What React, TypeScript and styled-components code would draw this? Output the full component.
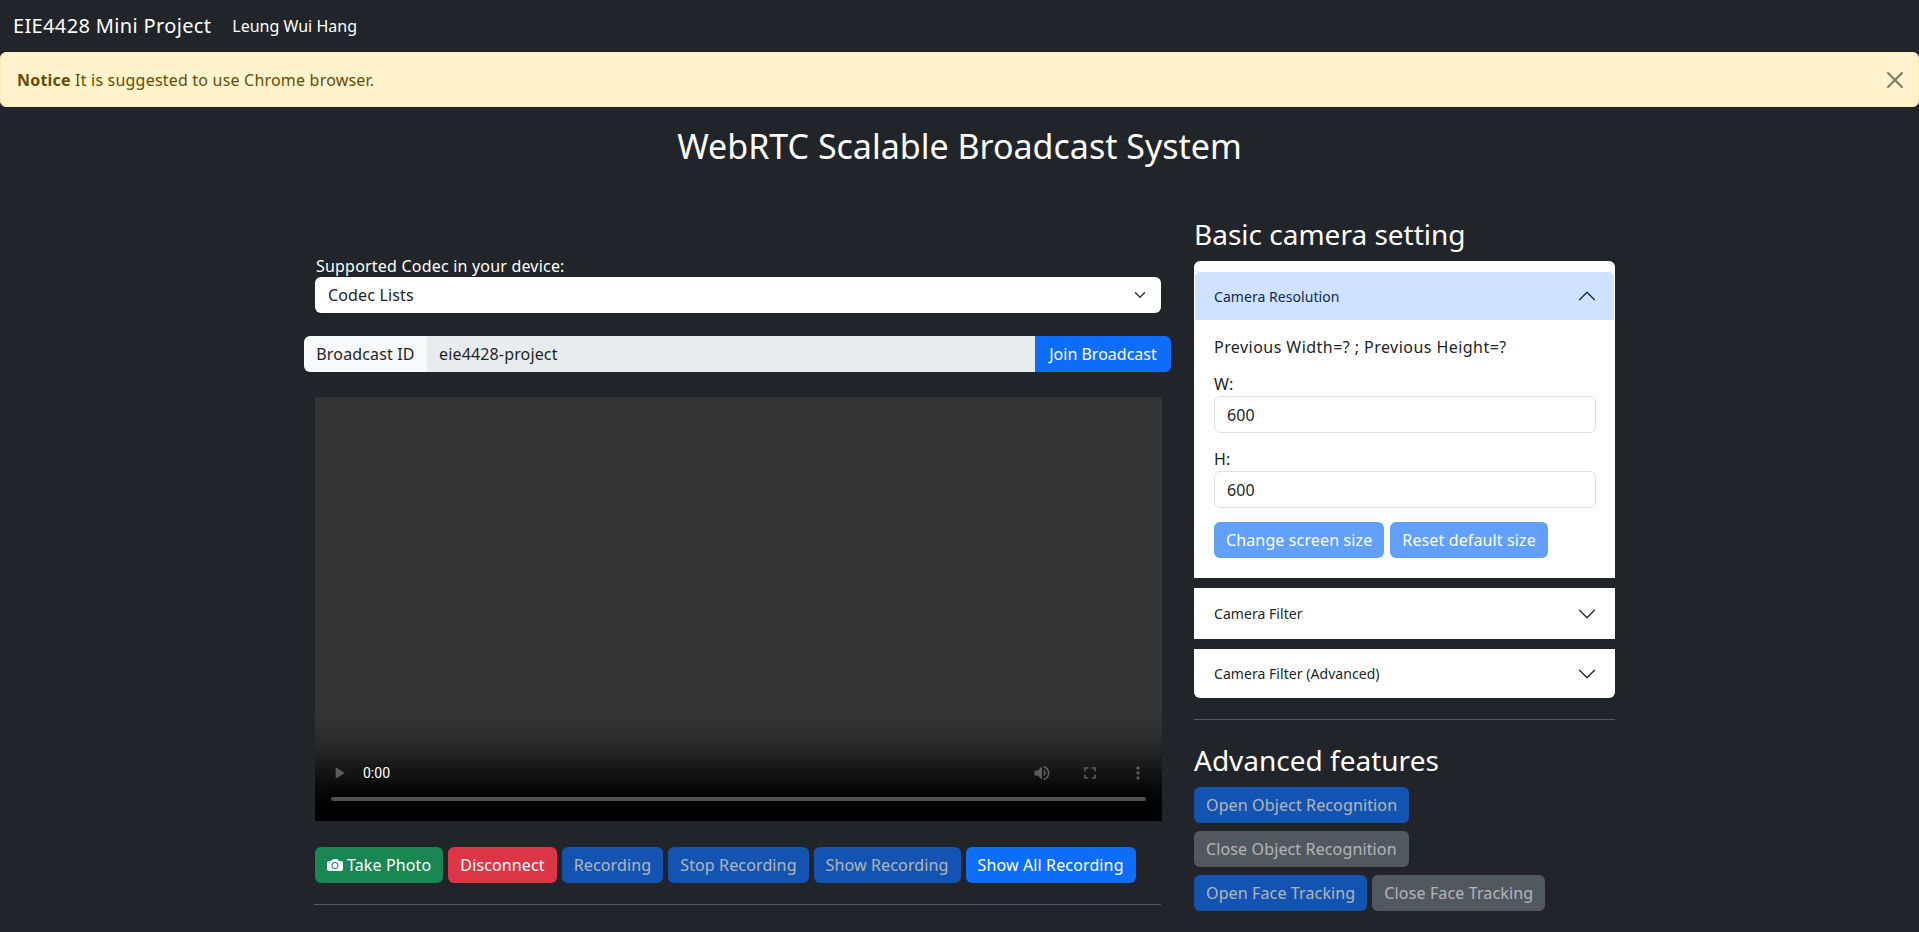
import React from "react";
import styled, { createGlobalStyle, css } from "styled-components";

const Global = createGlobalStyle`
  html, body { margin: 0; padding: 0; height: 932px; overflow: hidden; background: #212529; }
  body { font-family: "Noto Sans", "Open Sans", sans-serif; font-size: 16px; line-height: 1.5; color: #fff; letter-spacing: .15px; }
  * { box-sizing: border-box; }
`;

const Navbar = styled.nav`
  height: 52px; display: flex; align-items: center; padding: 0 13px; gap: 21px; background: #212529;
`;
const Brand = styled.span`font-size: 20px; letter-spacing: .35px;`;
const NavLink = styled.span`font-size: 16px; letter-spacing: 0;`;

const Alert = styled.div`
  height: 55px; display: flex; align-items: center; justify-content: space-between;
  padding: 0 15px 0 16px; background: #fff3cd; border: 1px solid #ffecb5; border-radius: 6px; color: #664d03; font-size: 16px; letter-spacing: .2px;
  b { font-weight: 700; }
`;
const CloseIcon = styled.svg`width: 16px; height: 16px; opacity: .5; display: block;`;

const Title = styled.h1`
  margin: 9px 0 0; height: 60px; line-height: 60px; text-align: center; font-size: 34px; font-weight: 400; letter-spacing: 0;
`;

const Columns = styled.main`
  width: 1311px; margin: 0 auto; display: flex; gap: 23px; align-items: flex-start;
`;
const LeftCol = styled.section`
  width: 867px; padding-top: 82px; display: flex; flex-direction: column;
`;
const RightCol = styled.aside`width: 421px; padding-top: 40px;`;

const CodecBlock = styled.div`padding: 0 10px 0 11px;`;
const CodecLabel = styled.label`display: block; height: 19px; line-height: 17px; letter-spacing: .2px; padding-left: 1px;`;
const SelectBox = styled.div`
  height: 36px; background: #fff; border-radius: 6px; color: #212529; display: flex; align-items: center;
  justify-content: space-between; padding: 0 13px;
`;
const InputGroup = styled.div`
  margin-top: 23px; height: 36px; display: flex; border-radius: 6px; overflow: hidden;
`;
const GroupLabel = styled.span`
  width: 123px; background: #f8f9fa; color: #212529; display: flex; align-items: center; justify-content: center;
`;
const GroupInput = styled.span`
  flex: 1; background: #e9ecef; color: #212529; display: flex; align-items: center; padding: 0 12px;
`;
const GroupButton = styled.span`
  width: 136px; background: #0d6efd; color: #fff; display: flex; align-items: center; justify-content: center; letter-spacing: 0;
`;
const VideoWrap = styled.div`margin: 25px 9px 0 11px;`;
const Video = styled.video`display: block; width: 847px; height: 424px; background: #333;`;

const Buttons = styled.div`
  display: flex; gap: 5px; margin: 26px 0 0 11px;
`;
const colors = { primary: "#0d6efd", secondary: "#6c757d", success: "#198754", danger: "#dc3545" } as const;
const Button = styled.button<{ $color: keyof typeof colors; $dim?: boolean }>`
  height: 36px; padding: 0 12px; border: 0; border-radius: 6px; color: #fff; font: inherit; letter-spacing: .13px; white-space: nowrap;
  display: inline-flex; align-items: center; gap: 4px;
  background: ${(p) => colors[p.$color]};
  ${(p) => p.$dim && css`opacity: .65;`}
`;
const Rule = styled.hr<{ $inset?: boolean }>`
  border: 0; border-top: 1px solid #54585c; margin: 21px 10px 0 10px;
  ${(p) => p.$inset && css`margin: 21px 0 0;`}
`;

const SectionTitle = styled.h3`
  margin: 0; font-size: 28px; font-weight: 400; line-height: 36px; height: 45px; letter-spacing: 0;
`;
const Accordion = styled.div`display: flex; flex-direction: column; gap: 10px;`;
const Item = styled.div<{ $first?: boolean; $last?: boolean }>`
  background: #fff; color: #212529;
  ${(p) => p.$first && css`border-radius: 6px 6px 0 0; padding-top: 11px;`}
  ${(p) => p.$last && css`border-radius: 0 0 6px 6px;`}
`;
const ItemHead = styled.div<{ $open?: boolean; $h: number }>`
  height: ${(p) => p.$h}px; display: flex; align-items: center; justify-content: space-between; padding: 0 18px 0 20px; font-size: 14px; letter-spacing: .05px;
  ${(p) => p.$open && css`background: #cfe2ff; color: #0c2a55; margin: 0 1px; padding: 0 17px 0 19px; border-radius: 5px 5px 0 0;`}
`;
const ItemBody = styled.div`padding: 15px 19px 20px 20px;`;
const Info = styled.p`margin: 0; height: 23px; line-height: 24px; letter-spacing: .45px;`;
const FieldLabel = styled.label`display: block; height: 25px; line-height: 27px; margin-top: 13px;`;
const Field = styled.div`
  height: 37px; border: 1px solid #dee2e6; border-radius: 6px; padding: 0 12px; display: flex; align-items: center; color: #212529;
`;
const BodyButtons = styled.div`display: flex; gap: 6px; margin-top: 14px;`;
const AdvancedTitle = styled(SectionTitle)`margin-top: 22px;`;
const ButtonRow = styled.div`display: flex; gap: 5px; margin-bottom: 8px;`;

const Chevron = ({ up, color = "#212529" }: { up?: boolean; color?: string }) => (
  <svg width="20" height="20" viewBox="0 0 16 16" fill={color} style={{ transform: up ? "rotate(180deg)" : undefined }}>
    <path fillRule="evenodd" d="M1.646 4.646a.5.5 0 0 1 .708 0L8 10.293l5.646-5.647a.5.5 0 0 1 .708.708l-6 6a.5.5 0 0 1-.708 0l-6-6a.5.5 0 0 1 0-.708z" />
  </svg>
);

export default function App() {
  return (
    <>
      <Global />
      <Navbar>
        <Brand>EIE4428 Mini Project</Brand>
        <NavLink>Leung Wui Hang</NavLink>
      </Navbar>
      <Alert>
        <span><b>Notice</b> It is suggested to use Chrome browser.</span>
        <CloseIcon viewBox="0 0 16 16" fill="#000">
          <path d="M.293.293a1 1 0 0 1 1.414 0L8 6.586 14.293.293a1 1 0 1 1 1.414 1.414L9.414 8l6.293 6.293a1 1 0 0 1-1.414 1.414L8 9.414l-6.293 6.293a1 1 0 0 1-1.414-1.414L6.586 8 .293 1.707a1 1 0 0 1 0-1.414z" />
        </CloseIcon>
      </Alert>
      <Title>WebRTC Scalable Broadcast System</Title>
      <Columns>
        <LeftCol>
          <CodecBlock>
            <CodecLabel>Supported Codec in your device:</CodecLabel>
            <SelectBox>
              Codec Lists
              <svg width="16" height="12" viewBox="0 0 16 16" fill="none" stroke="#343a40" strokeWidth="2" strokeLinecap="round" strokeLinejoin="round"><path d="M2 5l6 6 6-6" /></svg>
            </SelectBox>
          </CodecBlock>
          <InputGroup>
            <GroupLabel>Broadcast ID</GroupLabel>
            <GroupInput>eie4428-project</GroupInput>
            <GroupButton>Join Broadcast</GroupButton>
          </InputGroup>
          <VideoWrap>
            <Video controls />
          </VideoWrap>
          <Buttons>
            <Button $color="success">
              <svg width="16" height="16" viewBox="0 0 16 16" fill="#fff"><path d="M10.5 8.5a2.5 2.5 0 1 1-5 0 2.5 2.5 0 0 1 5 0z" /><path d="M2 4a2 2 0 0 0-2 2v6a2 2 0 0 0 2 2h12a2 2 0 0 0 2-2V6a2 2 0 0 0-2-2h-1.172a2 2 0 0 1-1.414-.586l-.828-.828A2 2 0 0 0 9.172 2H6.828a2 2 0 0 0-1.414.586l-.828.828A2 2 0 0 1 3.172 4H2zm.5 2a.5.5 0 1 1 0-1 .5.5 0 0 1 0 1zm9 2.5a3.5 3.5 0 1 1-7 0 3.5 3.5 0 0 1 7 0z" /></svg>
              Take Photo
            </Button>
            <Button $color="danger">Disconnect</Button>
            <Button $color="primary" $dim>Recording</Button>
            <Button $color="primary" $dim>Stop Recording</Button>
            <Button $color="primary" $dim>Show Recording</Button>
            <Button $color="primary">Show All Recording</Button>
          </Buttons>
          <Rule />
        </LeftCol>
        <RightCol>
          <SectionTitle>Basic camera setting</SectionTitle>
          <Accordion>
            <Item $first>
              <ItemHead $open $h={48}>Camera Resolution<Chevron up color="#0c2a55" /></ItemHead>
              <ItemBody>
                <Info>Previous Width=? ; Previous Height=?</Info>
                <FieldLabel>W:</FieldLabel>
                <Field>600</Field>
                <FieldLabel>H:</FieldLabel>
                <Field>600</Field>
                <BodyButtons>
                  <Button $color="primary" $dim>Change screen size</Button>
                  <Button $color="primary" $dim>Reset default size</Button>
                </BodyButtons>
              </ItemBody>
            </Item>
            <Item><ItemHead $h={51}>Camera Filter<Chevron /></ItemHead></Item>
            <Item $last><ItemHead $h={49}>Camera Filter (Advanced)<Chevron /></ItemHead></Item>
          </Accordion>
          <Rule $inset />
          <AdvancedTitle>Advanced features</AdvancedTitle>
          <ButtonRow><Button $color="primary" $dim>Open Object Recognition</Button></ButtonRow>
          <ButtonRow><Button $color="secondary" $dim>Close Object Recognition</Button></ButtonRow>
          <ButtonRow>
            <Button $color="primary" $dim>Open Face Tracking</Button>
            <Button $color="secondary" $dim>Close Face Tracking</Button>
          </ButtonRow>
        </RightCol>
      </Columns>
    </>
  );
}
